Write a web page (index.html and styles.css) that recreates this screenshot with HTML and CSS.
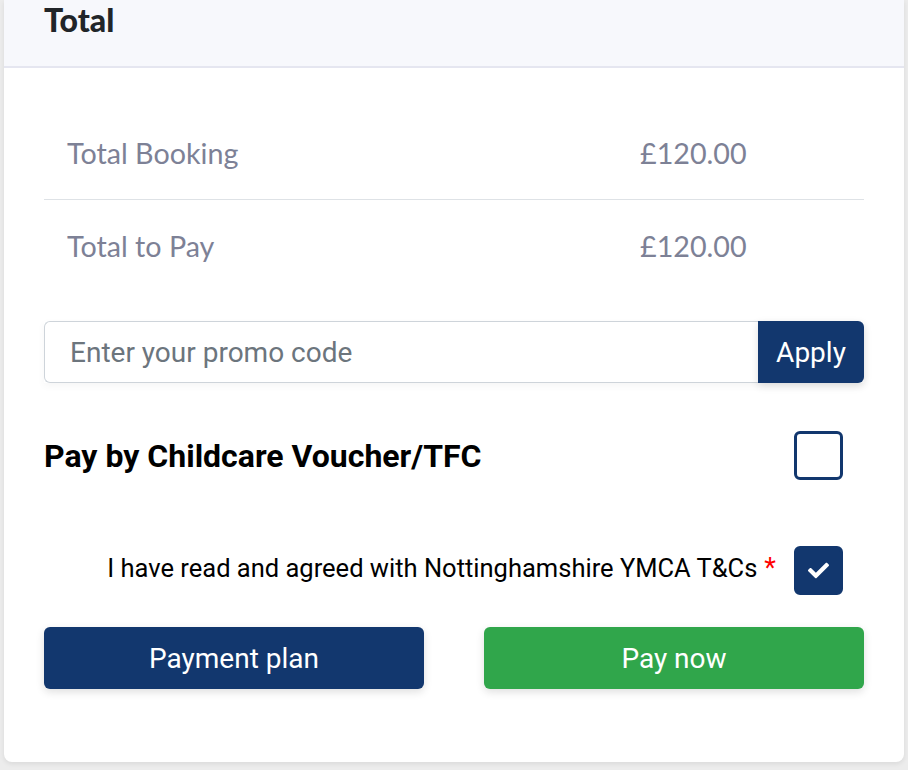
FILE: index.html
```html
<!DOCTYPE html>
<html lang="en">
<head>
<meta charset="utf-8">
<title>Total</title>
<link rel="stylesheet" href="styles.css">
</head>
<body>
<div class="page">
  <div class="card">
    <div class="card-header">
      <h2 class="card-title">Total</h2>
    </div>
    <div class="card-body">
      <div class="totals">
        <div class="total-row">
          <span class="total-label">Total Booking</span>
          <span class="total-value">£120.00</span>
        </div>
        <div class="total-row">
          <span class="total-label">Total to Pay</span>
          <span class="total-value">£120.00</span>
        </div>
      </div>

      <div class="promo">
        <input class="promo-input" type="text" placeholder="Enter your promo code">
        <button class="promo-btn" type="button">Apply</button>
      </div>

      <div class="voucher">
        <span class="voucher-label">Pay by Childcare Voucher/TFC</span>
        <span class="checkbox"></span>
      </div>

      <div class="terms">
        <span class="terms-text">I have read and agreed with Nottinghamshire YMCA T&amp;Cs</span>
        <span class="required">*</span>
        <span class="checkbox checkbox-checked">
          <svg class="check-icon" viewBox="0 0 512 512" aria-hidden="true"><path d="M173.898 439.404l-166.4-166.4c-9.997-9.997-9.997-26.206 0-36.204l36.203-36.204c9.997-9.998 26.207-9.998 36.204 0L192 312.69 432.095 72.596c9.997-9.997 26.207-9.997 36.204 0l36.203 36.204c9.997 9.997 9.997 26.206 0 36.204l-294.4 294.401c-9.998 9.997-26.207 9.997-36.204-.001z"/></svg>
        </span>
      </div>

      <div class="actions">
        <button class="btn btn-navy" type="button">Payment plan</button>
        <button class="btn btn-green" type="button">Pay now</button>
      </div>
    </div>
  </div>
</div>
</body>
</html>
```

FILE: styles.css
```css
* { box-sizing: border-box; }

html, body {
  margin: 0;
  padding: 0;
}

body {
  background: #ececec;
  font-family: Roboto, "Liberation Sans", Arial, sans-serif;
  color: #000;
}

.page {
  padding: 0 4px 7px 4px;
}

.card {
  background: #fff;
  border-radius: 0 0 8px 8px;
  box-shadow: 0 2px 5px rgba(0, 0, 0, 0.08);
}

.card-header {
  height: 68px;
  background: #f7f8fc;
  border-bottom: 2px solid #e5e6f0;
  padding: 0 40px;
}

.card-title {
  margin: 0;
  font-family: Lato, "Open Sans", sans-serif;
  font-weight: 900;
  font-size: 32px;
  line-height: 40px;
  color: #212529;
}

.card-body {
  padding: 39px 40px 73px;
}

.total-row {
  display: flex;
  align-items: center;
  height: 92px;
  padding: 0 23px;
  font-family: Lato, "Open Sans", sans-serif;
  font-size: 28.7px;
  color: #7d8196;
}

.total-row + .total-row {
  border-top: 1px solid #dee2e6;
}

.total-label {
  flex: 1;
}

.total-value {
  width: 201px;
}

.promo {
  display: flex;
  margin-top: 30px;
  height: 62px;
  box-shadow: 0 3px 8px rgba(0, 0, 0, 0.04);
}

.promo-input {
  flex: 1;
  min-width: 0;
  height: 100%;
  border: 1px solid #ced4da;
  border-right: none;
  border-radius: 6px 0 0 6px;
  padding: 0 25px;
  font-family: Roboto, sans-serif;
  font-size: 28px;
  color: #495057;
  outline: none;
}

.promo-input::placeholder {
  color: #6c757d;
}

.promo-btn {
  width: 106px;
  height: 100%;
  border: none;
  border-radius: 0 6px 6px 0;
  background: #12376e;
  color: #fff;
  font-family: Roboto, sans-serif;
  font-size: 28px;
  padding: 0;
  box-shadow: 0 3px 8px rgba(0, 0, 0, 0.12);
}

.voucher {
  display: flex;
  align-items: center;
  justify-content: space-between;
  margin-top: 48px;
}

.voucher-label {
  font-weight: 700;
  font-size: 32px;
  color: #000;
}

.checkbox {
  width: 49px;
  height: 49px;
  border: 3px solid #12376e;
  border-radius: 6px;
  margin-right: 21px;
  display: flex;
  align-items: center;
  justify-content: center;
  flex: none;
}

.checkbox-checked {
  background: #12376e;
}

.check-icon {
  width: 21px;
  height: 21px;
  fill: #fff;
}

.terms {
  display: flex;
  align-items: center;
  justify-content: flex-end;
  margin-top: 66px;
}

.terms-text {
  font-size: 25.5px;
  color: #000;
  padding-bottom: 6px;
}

.required {
  color: #ff0000;
  font-size: 27px;
  margin-left: 7px;
  margin-right: 18px;
  padding-bottom: 6px;
}

.actions {
  display: grid;
  grid-template-columns: 1fr 1fr;
  column-gap: 60px;
  margin-top: 32px;
}

.btn {
  height: 62px;
  border: none;
  border-radius: 6px;
  color: #fff;
  font-family: Roboto, sans-serif;
  font-size: 28px;
  box-shadow: 0 3px 9px rgba(0, 0, 0, 0.13);
}

.btn-navy {
  background: #12376e;
}

.btn-green {
  background: #30a64b;
}
```
